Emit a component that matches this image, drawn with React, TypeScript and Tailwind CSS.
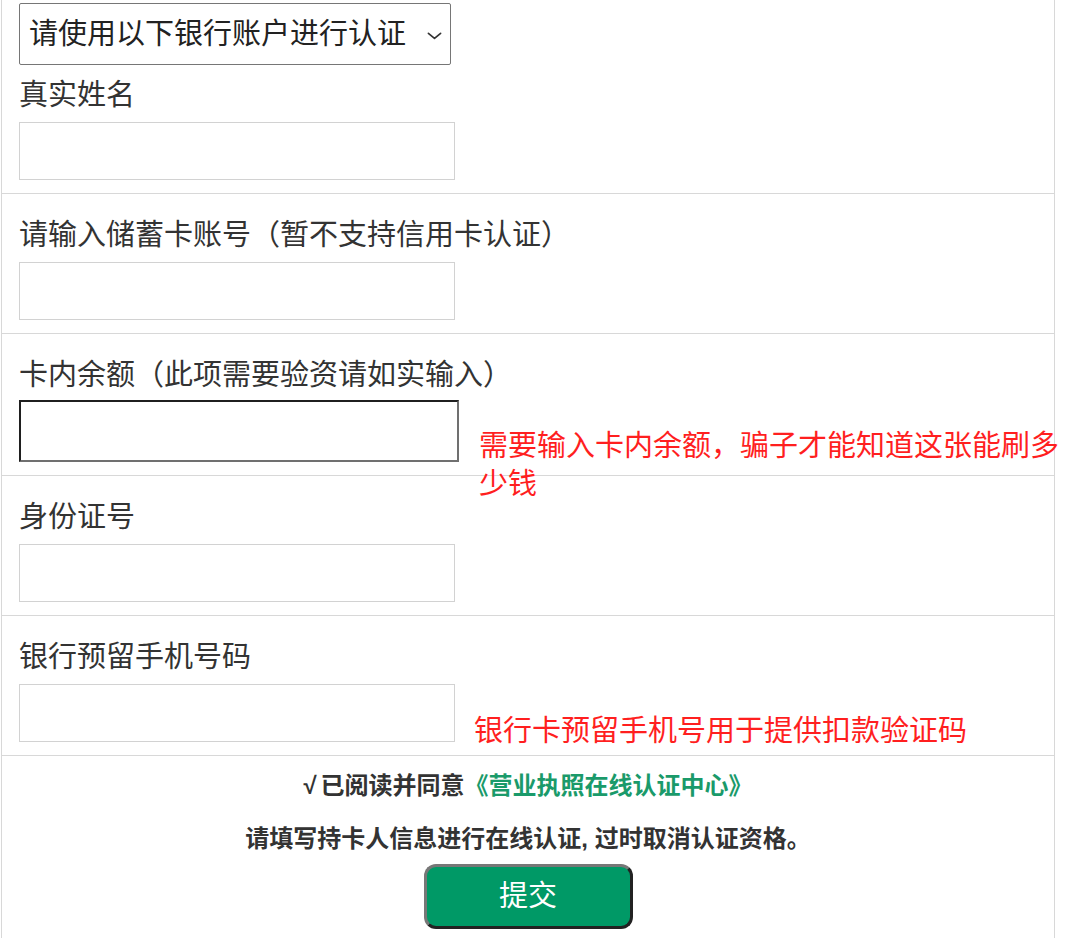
import { useState } from 'react';

const fields = [
  { label: '请输入储蓄卡账号（暂不支持信用卡认证）', focused: false },
  { label: '卡内余额（此项需要验资请如实输入）', focused: true },
  { label: '身份证号', focused: false },
  { label: '银行预留手机号码', focused: false },
];

function Chevron() {
  return (
    <svg
      viewBox="0 0 16 8"
      className="pointer-events-none absolute left-[408px] top-[29px] w-[15px] h-[8px]"
      fill="none"
      stroke="#333"
      strokeWidth="1.8"
      strokeLinecap="round"
      strokeLinejoin="round"
    >
      <path d="M1.5 1.2 L8 6.6 L14.5 1.2" />
    </svg>
  );
}

function TextField({ focused }: { focused: boolean }) {
  if (focused) {
    return (
      <input
        type="text"
        className="mt-[7px] block w-[440px] h-[62px] border-2 border-t-[#1f1f1f] border-l-[#1f1f1f] border-r-[#707070] border-b-[#707070] bg-white outline-none"
      />
    );
  }
  return (
    <input
      type="text"
      className="mt-[9px] block w-[436px] h-[58px] border border-[#d2d2d2] bg-white outline-none"
    />
  );
}

export default function App() {
  const [bank, setBank] = useState('default');

  return (
    <div className="relative h-[938px] w-[1080px] overflow-hidden bg-white font-['Liberation_Sans','Noto_Sans_CJK_SC',sans-serif] text-[#333]">
      <div className="ml-px w-[1054px] h-full border-x border-[#d8d8d8]">
        {/* first block: bank select + name */}
        <div className="pl-[17px] pt-[3px] pb-[13px] border-b border-[#d8d8d8]">
          <div className="relative w-[432px]">
            <select
              value={bank}
              onChange={(e) => setBank(e.target.value)}
              className="block w-[432px] h-[62px] appearance-none rounded-[2px] border border-[#767676] bg-white pl-[9px] text-[29px] leading-[36px] text-[#222] outline-none"
            >
              <option value="default">请使用以下银行账户进行认证</option>
            </select>
            <Chevron />
          </div>
          <div className="mt-[12px] h-[36px] text-[29px] leading-[36px]">真实姓名</div>
          <TextField focused={false} />
        </div>

        {fields.map((f) => (
          <div key={f.label} className="pl-[17px] pt-[23px] pb-[13px] border-b border-[#d8d8d8]">
            <div className="h-[36px] text-[29px] leading-[36px] whitespace-nowrap">{f.label}</div>
            <TextField focused={f.focused} />
          </div>
        ))}

        <div className="flex flex-col items-center pt-[15px]">
          <div className="text-[24px] leading-[30px] font-bold text-[#333]">
            <span className="mr-[4px]">√</span>已阅读并同意<span className="text-[#1a9a6a]">《营业执照在线认证中心》</span>
          </div>
          <div className="mt-[23px] text-[24px] leading-[30px] font-bold text-[#333]">
            请填写持卡人信息进行在线认证, 过时取消认证资格。
          </div>
          <button className="mt-[10px] flex h-[65px] w-[209px] items-center justify-center rounded-[12px] border-[3px] border-t-[#777] border-l-[#777] border-r-[#222] border-b-[#222] bg-[#009966] text-[29px] text-white">
            提交
          </button>
        </div>
      </div>

      {/* red annotations */}
      <div className="absolute left-[479px] top-[427px] w-[590px] text-[29px] leading-[38px] text-[#ff1f1f]">
        需要输入卡内余额，骗子才能知道这张能刷多少钱
      </div>
      <div className="absolute left-[474px] top-[712px] whitespace-nowrap text-[29px] leading-[38px] text-[#ff1f1f]">
        银行卡预留手机号用于提供扣款验证码
      </div>
    </div>
  );
}
